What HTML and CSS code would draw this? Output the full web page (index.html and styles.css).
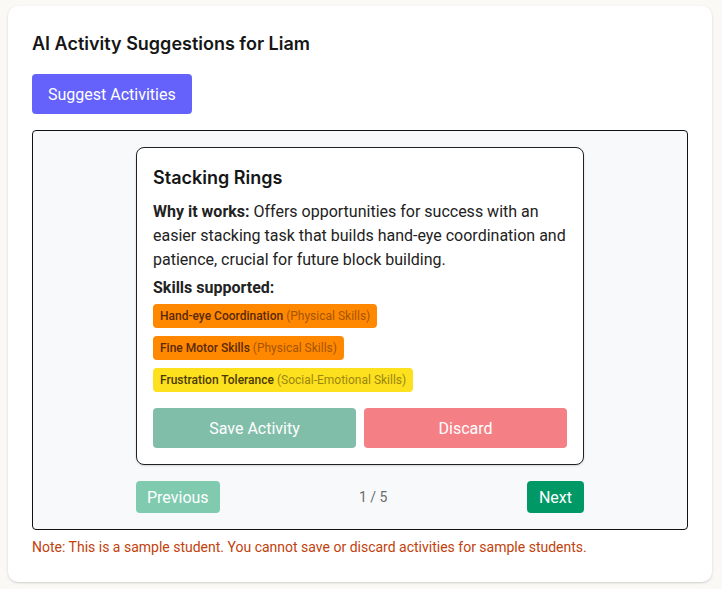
FILE: index.html
```html
<!DOCTYPE html>
<html>
<head>
<meta charset="utf-8">
<link rel="stylesheet" href="styles.css">
</head>
<body>
<div class="panel">
  <h2 class="title">AI Activity Suggestions for Liam</h2>
  <button class="btn suggest">Suggest Activities</button>
  <div class="box">
    <div class="inner">
      <div class="card">
        <h3 class="card-title">Stacking Rings</h3>
        <p class="why"><b>Why it works:</b> Offers opportunities for success with an easier stacking task that builds hand-eye coordination and patience, crucial for future block building.</p>
        <p class="skills-label">Skills supported:</p>
        <div class="tags">
          <span class="tag orange">Hand-eye Coordination <span class="cat">(Physical Skills)</span></span>
          <span class="tag orange">Fine Motor Skills <span class="cat">(Physical Skills)</span></span>
          <span class="tag yellow">Frustration Tolerance <span class="cat">(Social-Emotional Skills)</span></span>
        </div>
        <div class="actions">
          <button class="btn save">Save Activity</button>
          <button class="btn discard">Discard</button>
        </div>
      </div>
      <div class="nav">
        <button class="btn prev">Previous</button>
        <span class="count">1 / 5</span>
        <button class="btn next">Next</button>
      </div>
    </div>
  </div>
  <p class="note">Note: This is a sample student. You cannot save or discard activities for sample students.</p>
</div>
</body>
</html>
```
FILE: styles.css
```css
* { box-sizing: border-box; }
html, body { margin: 0; padding: 0; }
body {
  background: #faf9f5;
  font-family: Roboto, "Liberation Sans", sans-serif;
  color: #1f1f1f;
  padding: 6px 10px 7px 8px;
}
.panel {
  background: #fff;
  border-radius: 10px;
  box-shadow: 0 1px 3px rgba(0,0,0,0.12), 0 1px 2px rgba(0,0,0,0.06);
  padding: 24px 24px 19px 24px;
  height: 576px;
}
.title {
  font-family: Inter, sans-serif;
  font-size: 18px;
  font-weight: 600;
  margin: 0 0 16px 0;
  line-height: 28px;
  color: #161616;
}
.btn {
  font-family: Roboto, sans-serif;
  font-weight: 400;
  border: none;
  color: #fff;
  border-radius: 4px;
  font-size: 16px;
  cursor: pointer;
}
.suggest {
  background: #6462fb;
  height: 40px;
  padding: 0 16px;
  display: block;
}
.box {
  margin-top: 16px;
  border: 1px solid #111;
  border-radius: 4px;
  background: #f8f9fb;
  padding: 16px;
}
.inner {
  width: 448px;
  margin: 0 auto;
}
.card {
  background: #fff;
  border: 1px solid #222;
  border-radius: 8px;
  box-shadow: 0 1px 2px rgba(0,0,0,0.15);
  padding: 16px 16px 16px 16px;
}
.card-title {
  font-family: Inter, sans-serif;
  font-size: 18px;
  font-weight: 600;
  line-height: 28px;
  margin: 0 0 8px 0;
  color: #161616;
}
.why {
  margin: 0 0 4px 0;
  font-size: 16px;
  line-height: 24px;
  color: #222;
}
.why b { font-weight: 700; }
.skills-label {
  margin: 0 0 4px 0;
  font-size: 16px;
  font-weight: 700;
  line-height: 24px;
  color: #222;
}
.tags {
  display: flex;
  flex-direction: column;
  align-items: flex-start;
  gap: 8px;
}
.tag {
  font-size: 12px;
  font-weight: 500;
  line-height: 24px;
  height: 24px;
  padding: 0 7px;
  border-radius: 4px;
  color: #5a2a08;
}
.tag .cat { opacity: 0.55; font-weight: 400; }
.orange { background: #ff8800; }
.yellow { background: #fde01e; color: #4a3a05; }
.actions {
  display: flex;
  gap: 8px;
  margin-top: 16px;
}
.actions .btn {
  flex: 1;
  height: 40px;
}
.save { background: #81bea9; }
.discard { background: #f47f84; }
.nav {
  margin-top: 16px;
  display: flex;
  align-items: center;
  justify-content: space-between;
}
.prev {
  background: #80cbb0;
  height: 32px;
  padding: 0 11px;
}
.next {
  background: #009966;
  height: 32px;
  padding: 0 12px;
}
.count {
  font-size: 14px;
  color: #6b6b6b;
}
.note {
  margin: 7px 0 0 0;
  font-size: 14px;
  line-height: 20px;
  color: #c2410c;
}
```
